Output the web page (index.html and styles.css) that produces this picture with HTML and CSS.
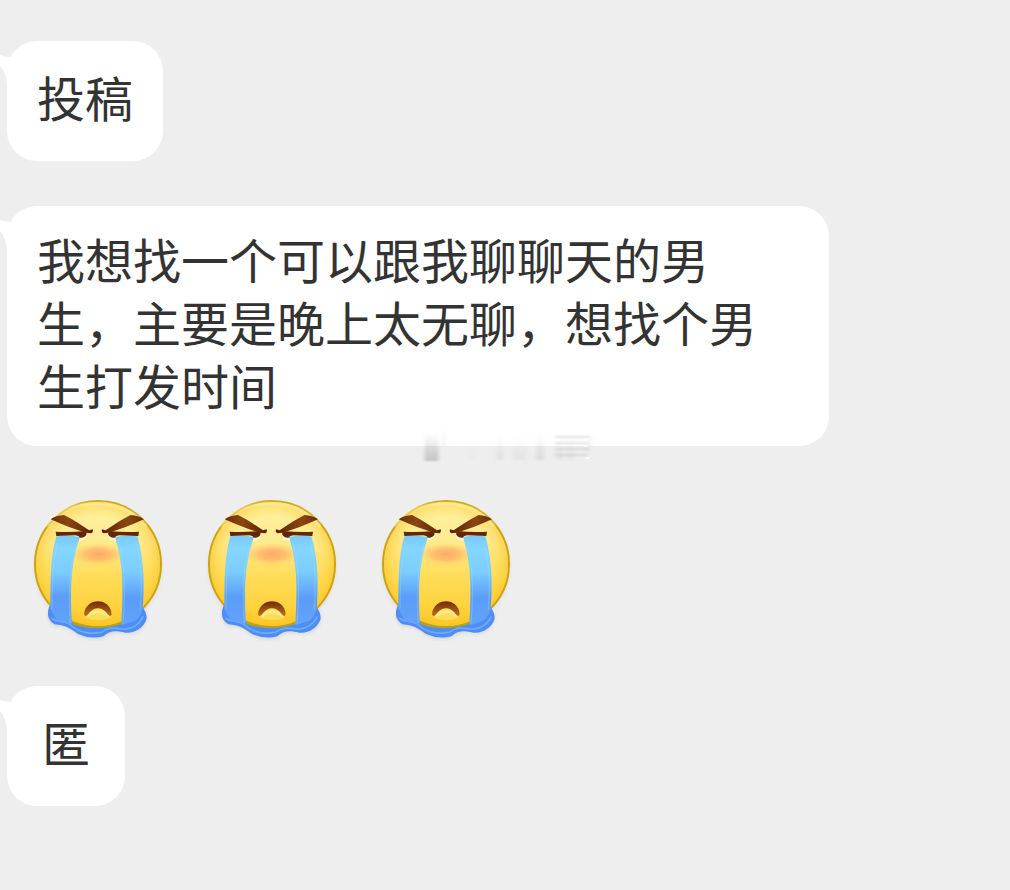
FILE: index.html
```html
<!DOCTYPE html>
<html lang="zh-CN">
    <head>
        <meta charset="utf-8">
        <meta name="viewport" content="width=device-width, initial-scale=1">
        <title>投稿</title>
        <link rel="stylesheet" href="styles.css">
    </head>
    <body>
        <svg class="symbols" aria-hidden="true">
            <defs>
                <linearGradient id="faceFill" x1="0" y1="0" x2="0" y2="1">
                    <stop offset="0" stop-color="#fff3a4"/>
                    <stop offset="0.3" stop-color="#ffeb90"/>
                    <stop offset="0.6" stop-color="#ffdd58"/>
                    <stop offset="1" stop-color="#ffca2c"/>
                </linearGradient>
                <radialGradient id="faceEdge">
                    <stop offset="0.75" stop-color="#ffd23c" stop-opacity="0"/>
                    <stop offset="1" stop-color="#f5c01f" stop-opacity="0.5"/>
                </radialGradient>
                <linearGradient id="tearFill" x1="0" y1="0" x2="0" y2="1">
                    <stop offset="0" stop-color="#76c9fb"/>
                    <stop offset="0.15" stop-color="#84d6ff"/>
                    <stop offset="0.4" stop-color="#7ccdfd"/>
                    <stop offset="0.7" stop-color="#5a9cf8"/>
                    <stop offset="1" stop-color="#62a4f9"/>
                </linearGradient>
                <linearGradient id="browFill" x1="0" y1="0" x2="1" y2="0">
                    <stop offset="0" stop-color="#6c2e08"/>
                    <stop offset="0.4" stop-color="#8b4614"/>
                    <stop offset="1" stop-color="#582104"/>
                </linearGradient>
                <linearGradient id="mouthFill" x1="0" y1="0" x2="0" y2="1">
                    <stop offset="0" stop-color="#702b05"/>
                    <stop offset="1" stop-color="#bd711c"/>
                </linearGradient>
                <radialGradient id="blush">
                    <stop offset="0" stop-color="#ff9c65" stop-opacity="0.85"/>
                    <stop offset="0.5" stop-color="#ffac69" stop-opacity="0.65"/>
                    <stop offset="1" stop-color="#ffca70" stop-opacity="0"/>
                </radialGradient>
                <filter id="shadow" x="-20%" y="-20%" width="140%" height="140%">
                    <feGaussianBlur stdDeviation="6"/>
                </filter>
                <filter id="soft" x="-20%" y="-50%" width="140%" height="200%">
                    <feGaussianBlur stdDeviation="3"/>
                </filter>
                <g id="eyeWhite">
                    <path d="M170 138 L200 130 Q204 148 176 150Z" fill="#fff6d8"/>
                </g>
                <g id="eye">
                    <path d="M107 123 Q150 125 197 121 L200 130 Q194 143 180 141 Q177 135 166 134 L109 136Z" fill="#622806"/>
                    <path d="M92 86 Q108 74 132 73 C159 86 183 103 207 119 L218 116 Q221 124 214 128 L198 126 C166 117 129 103 92 86Z" fill="url(#browFill)"/>
                </g>
                <symbol id="cry" viewBox="30 1 420 450">
                    <circle cx="234" cy="228" r="188" fill="#8a8a9a" opacity="0.25" filter="url(#shadow)"/>
                    <path d="M86 365 Q83 398 108 406 C140 403 155 418 174 431 Q213 451 252 439 C276 416 309 427 334 427 Q373 418 380 378 L365 352Z" fill="#77839d" opacity="0.3" filter="url(#shadow)"/>
                    <circle cx="234" cy="220" r="189" fill="url(#faceFill)" stroke="#cfa30f" stroke-width="6"/>
                    <circle cx="234" cy="220" r="186" fill="url(#faceEdge)"/>
                    <path d="M82 108 C120 50 170 39 234 39 C300 39 349 67 380 108" fill="none" stroke="#fff9b9" stroke-width="7" opacity="0.7" filter="url(#soft)"/>
                    <ellipse cx="235" cy="191" rx="82" ry="34" fill="url(#blush)"/>
                    <use href="#eyeWhite"/>
                    <use href="#eyeWhite" transform="translate(464 0) scale(-1 1)"/>
                    <path d="M90 344 C80 362 80 388 104 401 C140 403 155 417 174 430 Q212 447 250 437 C270 418 290 420 316 426 C345 428 370 411 379 387 C382 373 376 361 367 349 L352 382 Q295 407 234 411 Q165 409 109 370Z" fill="#4e8df1"/>
                    <path d="M94 382 C114 398 137 387 157 407 C180 428 217 430 244 425 C269 406 287 413 311 415 C337 417 360 399 370 377" fill="none" stroke="#80bafe" stroke-width="5" opacity="0.65"/>
                    <path d="M109 137 Q140 132 180 139 C151 222 150 299 156 400 L112 390 L91 355 C92 281 89 204 109 137Z" fill="url(#tearFill)"/>
                    <path d="M285 139 Q322 132 352 137 C374 211 373 287 368 357 Q358 385 342 392 L304 404 C310 299 311 222 285 139Z" fill="url(#tearFill)"/>
                    <path d="M172 151 C147 232 146 312 151 397 M347 151 C368 227 365 297 361 358 M114 153 C95 220 97 293 96 354 M295 151 C317 229 316 306 309 399" fill="none" stroke="#a2ddff" stroke-width="4" opacity="0.3"/>
                    <path d="M158 398 Q232 422 304 398" fill="none" stroke="#b3a225" stroke-width="5"/>
                    <path d="M197 381 C208 354 222 350 235 350 C248 350 262 354 272 381 C250 390 219 390 197 381Z" fill="#ffdc58"/>
                    <path d="M203 377 C220 359 250 359 267 377" fill="none" stroke="#ffec88" stroke-width="9"/>
                    <path d="M192 370 C195 345 214 332 234 332 C255 332 273 346 275 370 C273 378 268 377 263 370 C247 347 221 347 205 370 C200 377 194 378 192 370Z" fill="url(#mouthFill)"/>
                    <use href="#eye"/>
                    <use href="#eye" transform="translate(464 0) scale(-1 1)"/>
                </symbol>
                <symbol id="tail" viewBox="0 0 16 32">
                    <path d="M0 0 Q5 2 12 2 L16 30 L7 32 Q7 18 0 11Z" fill="#fff"/>
                </symbol>
            </defs>
        </svg>

        <main class="chat">
            <p class="bubble">
                <svg class="tail" aria-hidden="true"><use href="#tail"/></svg>
                <span>投稿</span>
            </p>

            <p class="bubble">
                <svg class="tail" aria-hidden="true"><use href="#tail"/></svg>
                <span>我想找一个可以跟我聊聊天的男生，主要是晚上太无聊，想找个男生打发时间</span>
                <svg class="smudge" viewBox="0 0 190 44" aria-hidden="true">
                    <defs>
                        <linearGradient id="fade" x1="0" y1="0" x2="0" y2="1">
                            <stop offset="0" stop-color="#aaa" stop-opacity="0"/>
                            <stop offset="1" stop-color="#999" stop-opacity="0.6"/>
                        </linearGradient>
                        <filter id="smear" x="-50%" y="-50%" width="200%" height="200%">
                            <feGaussianBlur stdDeviation="2 1"/>
                        </filter>
                    </defs>
                    <g fill="url(#fade)" filter="url(#smear)">
                        <rect x="15" y="7" width="6" height="28"/>
                        <rect x="22" y="7" width="6" height="28"/>
                        <rect x="33" y="2" width="2" height="18" opacity="0.5"/>
                        <rect x="60" y="11" width="4" height="24" opacity="0.12"/>
                        <rect x="87" y="7" width="6" height="27" opacity="0.3"/>
                        <rect x="102" y="10" width="14" height="24" opacity="0.2"/>
                        <rect x="126" y="8" width="8" height="26" opacity="0.4"/>
                        <rect x="146" y="10" width="6" height="24" opacity="0.25"/>
                        <rect x="157" y="10" width="6" height="24" opacity="0.25"/>
                    </g>
                    <path d="M145 11H180 M145 17H179 M145 23H179 M145 29H177 M179 11V15 M179 18L176 25" fill="none" stroke="#aaa" stroke-width="2" opacity="0.35" filter="url(#smear)"/>
                    <path d="M174 13H180 M174 20H178 M175 32H180" stroke="#fff" stroke-width="2" opacity="0.6"/>
                </svg>
            </p>

            <div class="emojis">
                <svg class="emoji" role="img" aria-label="大哭"><use href="#cry"/></svg>
                <svg class="emoji" role="img" aria-label="大哭"><use href="#cry"/></svg>
                <svg class="emoji" role="img" aria-label="大哭"><use href="#cry"/></svg>
            </div>

            <p class="bubble">
                <svg class="tail" aria-hidden="true"><use href="#tail"/></svg>
                <span>匿</span>
            </p>
        </main>
    </body>
</html>
```
FILE: styles.css
```css
body{
    margin: 0;
    background-color: #eeeeee;
    color: #333;
    font-family: "Noto Sans CJK SC", sans-serif;
}

.symbols{
    position: absolute;
    width: 0;
    height: 0;
}

.chat{
    display: flex;
    flex-direction: column;
    align-items: flex-start;
    gap: 45px;
    padding: 41px 0 41px 7px;
}

.bubble{
    position: relative;
    display: flex;
    align-items: center;
    justify-content: center;
    box-sizing: border-box;
    min-width: 118px;
    max-width: 82%;
    min-height: 120px;
    margin: 0;
    padding: 21px 30px 30px;
    border-radius: 30px;
    background-color: #fff;
    font-size: 48px;
    line-height: 63px;
}

.tail{
    position: absolute;
    top: 14px;
    left: -7px;
    width: 16px;
    height: 32px;
}

.smudge{
    position: absolute;
    bottom: -24px;
    left: 49%;
    width: 190px;
    height: 44px;
}

.emojis{
    display: flex;
    gap: 34px;
    padding-left: 23px;
}

.emoji{
    width: 140px;
    height: 150px;
}
```
